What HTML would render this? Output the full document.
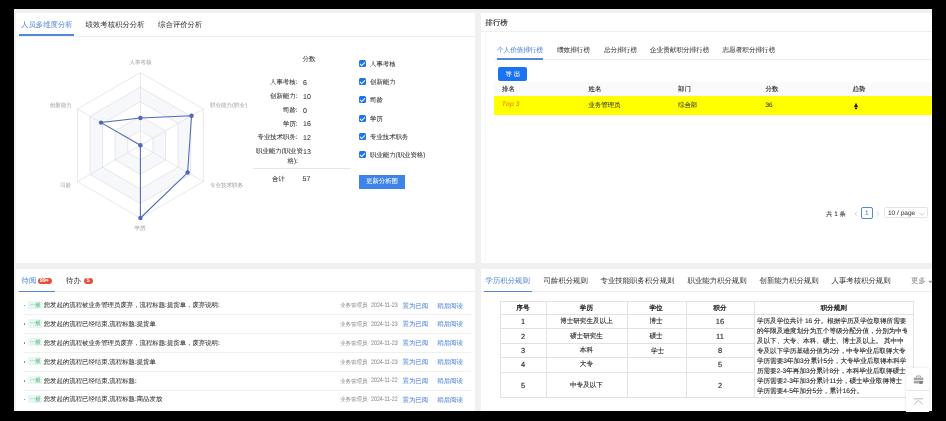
<!DOCTYPE html>
<html><head><meta charset="utf-8">
<style>
*{box-sizing:border-box;margin:0;padding:0}
html,body{width:946px;height:421px;overflow:hidden;background:#000}
body{position:relative;font-family:"Liberation Sans",sans-serif;color:#333;text-rendering:geometricPrecision;-webkit-text-stroke-width:0.06px}
.a{position:absolute}
.t{position:absolute;white-space:nowrap;line-height:1}
.card{position:absolute;background:#fff;overflow:hidden}
.hl{position:absolute;height:1px;background:#efefef}
.vl{position:absolute;width:1px;background:#efefef}
.f55{font-size:5.5px}
.f64{font-size:6.4px}
.f66{font-size:6.6px}
.f68{font-size:6.8px}
.f74{font-size:7.4px;-webkit-text-stroke-width:0.02px;color:#3a3a3a}
.blue{color:#5486dc}
.cb{position:absolute;width:7.3px;height:7.1px;background:#1f74ee;border-radius:1.5px}
.cb:after{content:"";position:absolute;left:2.4px;top:1px;width:1.9px;height:3.8px;border:solid #fff;border-width:0 0.8px 0.8px 0;transform:rotate(45deg)}
</style></head><body>
<div id="root" style="position:absolute;left:0;top:0;width:946px;height:421px;will-change:transform;filter:blur(0.3px)">
<div class="a" style="left:14px;top:9px;width:918px;height:402px;background:#f0f0f0"></div>

<!-- ============ top-left card ============ -->
<div class="card" style="left:15.5px;top:12.9px;width:459.7px;height:250.6px"></div>
<div class="t f74 blue" style="left:21px;top:21px">人员多维度分析</div>
<div class="t f74" style="left:85.5px;top:21px">绩效考核积分分析</div>
<div class="t f74" style="left:158px;top:21px">综合评价分析</div>
<div class="hl" style="left:15.5px;top:35.5px;width:459.7px"></div>
<div class="a" style="left:19px;top:34px;width:55px;height:2px;background:#5486dc"></div>

<div class="a" style="left:15px;top:37px;width:232px;height:220px;overflow:hidden">
<svg width="232" height="220" viewBox="15 37 232 220" style="position:absolute;left:0;top:0">
 <g id="radar">
 <path d="M140.40,116.22 L115.22,130.76 L115.22,159.84 L140.40,174.38 L165.58,159.84 L165.58,130.76Z M140.40,130.76 L127.81,138.03 L127.81,152.57 L140.40,159.84 L152.99,152.57 L152.99,138.03Z M140.40,87.14 L90.03,116.22 L90.03,174.38 L140.40,203.46 L190.77,174.38 L190.77,116.22Z M140.40,101.68 L102.62,123.49 L102.62,167.11 L140.40,188.92 L178.18,167.11 L178.18,123.49Z" fill="#f7f8fb" fill-rule="evenodd"/>
 <polygon points="140.40,130.76 127.81,138.03 127.81,152.57 140.40,159.84 152.99,152.57 152.99,138.03" fill="none" stroke="#e2e2e6" stroke-width="0.8"/>
 <polygon points="140.40,116.22 115.22,130.76 115.22,159.84 140.40,174.38 165.58,159.84 165.58,130.76" fill="none" stroke="#e2e2e6" stroke-width="0.8"/>
 <polygon points="140.40,101.68 102.62,123.49 102.62,167.11 140.40,188.92 178.18,167.11 178.18,123.49" fill="none" stroke="#e2e2e6" stroke-width="0.8"/>
 <polygon points="140.40,87.14 90.03,116.22 90.03,174.38 140.40,203.46 190.77,174.38 190.77,116.22" fill="none" stroke="#e2e2e6" stroke-width="0.8"/>
 <polygon points="140.40,72.60 77.44,108.95 77.44,181.65 140.40,218.00 203.36,181.65 203.36,108.95" fill="none" stroke="#e2e2e6" stroke-width="0.8"/>
 <line x1="140.4" y1="145.3" x2="140.40" y2="72.60" stroke="#e2e2e6" stroke-width="0.8"/>
 <line x1="140.4" y1="145.3" x2="77.44" y2="108.95" stroke="#e2e2e6" stroke-width="0.8"/>
 <line x1="140.4" y1="145.3" x2="77.44" y2="181.65" stroke="#e2e2e6" stroke-width="0.8"/>
 <line x1="140.4" y1="145.3" x2="140.40" y2="218.00" stroke="#e2e2e6" stroke-width="0.8"/>
 <line x1="140.4" y1="145.3" x2="203.36" y2="181.65" stroke="#e2e2e6" stroke-width="0.8"/>
 <line x1="140.4" y1="145.3" x2="203.36" y2="108.95" stroke="#e2e2e6" stroke-width="0.8"/>
 <polygon points="140.40,118.04 101.05,122.58 140.40,145.30 140.40,218.00 187.62,172.56 191.56,115.77" fill="none" stroke="#5068bc" stroke-width="1.05" stroke-linejoin="round"/>
 <circle cx="140.40" cy="118.04" r="2.2" fill="#5068bc"/>
 <circle cx="101.05" cy="122.58" r="2.2" fill="#5068bc"/>
 <circle cx="140.40" cy="145.30" r="2.2" fill="#5068bc"/>
 <circle cx="140.40" cy="218.00" r="2.2" fill="#5068bc"/>
 <circle cx="187.62" cy="172.56" r="2.2" fill="#5068bc"/>
 <circle cx="191.56" cy="115.77" r="2.2" fill="#5068bc"/>
 </g>
</svg>
<div class="t f55" style="left:114.5px;top:23.9px;color:#aaa">人事考核</div>
<div class="t f55" style="left:34.8px;top:67px;color:#aaa">创新能力</div>
<div class="t f55" style="left:195px;top:67px;color:#aaa">职业能力(职业资格)</div>
<div class="t f55" style="left:45.2px;top:146.8px;color:#aaa">司龄</div>
<div class="t f55" style="left:195px;top:146.5px;color:#aaa">专业技术职务</div>
<div class="t f55" style="left:119.5px;top:190px;color:#aaa">学历</div>
</div>

<!-- stats -->
<div class="t f64" style="left:302.5px;top:57.3px">分数</div>
<div class="t f64" style="left:270px;top:80.2px">人事考核:</div><div class="t" style="left:303px;top:79.6px;font-size:7px">6</div>
<div class="t f64" style="left:270px;top:94.2px">创新能力:</div><div class="t" style="left:303px;top:93.6px;font-size:7px">10</div>
<div class="t f64" style="left:283px;top:108.2px">司龄:</div><div class="t" style="left:303px;top:107.6px;font-size:7px">0</div>
<div class="t f64" style="left:283px;top:121.7px">学历:</div><div class="t" style="left:303px;top:121.1px;font-size:7px">16</div>
<div class="t f64" style="left:257.5px;top:135.2px">专业技术职务:</div><div class="t" style="left:303px;top:134.6px;font-size:7px">12</div>
<div class="t f64" style="left:256px;top:149.2px">职业能力(职业资</div><div class="t" style="left:303px;top:148.6px;font-size:7px">13</div>
<div class="t f64" style="left:287.5px;top:159px">格):</div>
<div class="hl" style="left:253px;top:168px;width:98px;background:#e6e6e6"></div>
<div class="t f64" style="left:272px;top:177px">合计</div><div class="t" style="left:302.5px;top:176.4px;font-size:7px">57</div>

<!-- checkboxes -->
<div class="cb" style="left:359px;top:60.0px"></div><div class="t f64" style="left:370px;top:62.0px">人事考核</div>
<div class="cb" style="left:359px;top:78.2px"></div><div class="t f64" style="left:370px;top:80.2px">创新能力</div>
<div class="cb" style="left:359px;top:96.4px"></div><div class="t f64" style="left:370px;top:98.4px">司龄</div>
<div class="cb" style="left:359px;top:114.6px"></div><div class="t f64" style="left:370px;top:116.6px">学历</div>
<div class="cb" style="left:359px;top:133.0px"></div><div class="t f64" style="left:370px;top:135.0px">专业技术职务</div>
<div class="cb" style="left:359px;top:151.3px"></div><div class="t f64" style="left:370px;top:153.3px">职业能力(职业资格)</div>
<div class="a" style="left:359px;top:174.8px;width:46px;height:13.8px;background:#3d83ea"></div>
<div class="t f64" style="left:366px;top:179.4px;color:#fff">更新分析图</div>

<!-- ============ top-right card ============ -->
<div class="card" style="left:481px;top:12.9px;width:451px;height:250.6px"></div>
<div class="t f74" style="left:485.5px;top:19px;color:#2a2a2a;-webkit-text-stroke-width:0.12px">排行榜</div>
<div class="hl" style="left:481px;top:31.2px;width:451px"></div>
<div class="vl" style="left:485.3px;top:31.5px;height:232px;background:#f9f9f9"></div>
<div class="t f66 blue" style="left:497px;top:47.50px">个人价值排行榜</div>
<div class="t f66" style="left:557px;top:47.50px;color:#444">绩效排行榜</div>
<div class="t f66" style="left:604px;top:47.50px;color:#444">总分排行榜</div>
<div class="t f66" style="left:650px;top:47.50px;color:#444">企业贡献积分排行榜</div>
<div class="t f66" style="left:722.5px;top:47.50px;color:#444">志愿者积分排行榜</div>
<div class="hl" style="left:494px;top:59px;width:438px"></div>
<div class="a" style="left:497px;top:58px;width:45.5px;height:1.5px;background:#5486dc"></div>
<div class="a" style="left:498px;top:67px;width:29px;height:14.3px;background:#1a73f0;border-radius:2px"></div>
<div class="t f64" style="left:505.5px;top:72px;color:#fff;letter-spacing:2px">导出</div>
<div class="a" style="left:494px;top:81.6px;width:438px;height:14.2px;background:#fafafa"></div>
<div class="t f64" style="left:502px;top:87.20px;color:#262626;-webkit-text-stroke-width:0.12px">排名</div>
<div class="t f64" style="left:588.5px;top:87.20px;color:#262626;-webkit-text-stroke-width:0.12px">姓名</div>
<div class="t f64" style="left:678px;top:87.20px;color:#262626;-webkit-text-stroke-width:0.12px">部门</div>
<div class="t f64" style="left:765.5px;top:87.20px;color:#262626;-webkit-text-stroke-width:0.12px">分数</div>
<div class="t f64" style="left:852.5px;top:87.20px;color:#262626;-webkit-text-stroke-width:0.12px">趋势</div>
<div class="a" style="left:494px;top:96px;width:438px;height:18.6px;background:#ffff00"></div>
<div class="t" style="left:501.8px;top:101.9px;font-size:6.7px;font-style:italic;font-weight:bold;color:#eb9a00;-webkit-text-stroke-width:0">Top 3</div>
<div class="t f64" style="left:588.5px;top:102.5px">业务管理员</div>
<div class="t f64" style="left:678px;top:102.5px">综合部</div>
<div class="t f64" style="left:765.5px;top:102.5px">36</div>
<svg class="a" style="left:853px;top:102px" width="6" height="8" viewBox="0 0 6 8"><path d="M3 0.8 L5.2 5.2 H0.8 Z" fill="#222"/><rect x="2" y="5.6" width="2" height="1.6" fill="#222"/></svg>
<!-- pagination -->
<div class="t f64" style="left:826px;top:211.50px;letter-spacing:0">共 1 条</div>
<svg class="a" style="left:854px;top:210.5px" width="4" height="6" viewBox="0 0 4 6"><path d="M3.2 0.6 L0.9 3 L3.2 5.4" fill="none" stroke="#c4c4c4" stroke-width="0.7"/></svg>
<div class="a" style="left:861px;top:207.4px;width:11.5px;height:11.2px;border:1px solid #5486dc;border-radius:2px"></div>
<div class="t" style="left:865px;top:211.3px;font-size:6.4px;color:#5486dc">1</div>
<svg class="a" style="left:875.5px;top:210.5px" width="4" height="6" viewBox="0 0 4 6"><path d="M0.8 0.6 L3.1 3 L0.8 5.4" fill="none" stroke="#c4c4c4" stroke-width="0.7"/></svg>
<div class="a" style="left:884.2px;top:207.4px;width:43.8px;height:11px;border:1px solid #e4e4e4;border-radius:1.5px"></div>
<div class="t" style="left:888px;top:211.3px;font-size:6.5px;color:#444">10 / page</div>
<svg class="a" style="left:919px;top:212px" width="6" height="4" viewBox="0 0 6 4"><path d="M0.5 0.8 L3 3.2 L5.5 0.8" fill="none" stroke="#bbb" stroke-width="0.7"/></svg>

<!-- ============ bottom-left card ============ -->
<div class="card" style="left:15.5px;top:268.6px;width:459.7px;height:142.4px"></div>
<div class="t f74 blue" style="left:21.5px;top:277.3px">待阅</div>
<div class="a" style="left:38.3px;top:277.5px;width:13.7px;height:6.7px;background:#e5503d;border-radius:3.4px"></div>
<div class="t" style="left:39.8px;top:279.1px;font-size:5.6px;color:#fff;font-weight:bold;letter-spacing:-0.2px;-webkit-text-stroke-width:0">99+</div>
<div class="t f74" style="left:66px;top:277.3px">待办</div>
<div class="a" style="left:83.5px;top:277.5px;width:9px;height:6.7px;background:#e5503d;border-radius:3.4px"></div>
<div class="t" style="left:86.4px;top:279.1px;font-size:5.6px;color:#fff;font-weight:bold;-webkit-text-stroke-width:0">5</div>
<div class="hl" style="left:15.5px;top:291px;width:459.7px"></div>
<div class="a" style="left:19px;top:290.5px;width:35.5px;height:1.5px;background:#5486dc"></div>
<div id="list">
<div class="a" style="left:23.6px;top:304.5px;width:1.9px;height:1.9px;background:#777;border-radius:1px"></div>
<div class="a" style="left:28.3px;top:300.5px;width:13.6px;height:8.4px;background:#e8f7ef;border-radius:1.5px"></div>
<div class="t f55" style="left:29.8px;top:303.6px;color:#5fba8c">一般</div>
<div class="t f64" style="left:43.7px;top:303.3px;color:#333">您发起的流程被业务管理员废弃，流程标题:提货单，废弃说明:</div>
<div class="t f55" style="left:340px;top:304.3px;color:#9a9a9a">业务管理员</div>
<div class="t" style="left:371.2px;top:303.2px;font-size:6.4px;color:#8c8c8c;transform:scaleX(0.83);transform-origin:0 0">2024-11-23</div>
<div class="t f64" style="left:402.5px;top:303.6px;color:#5486dc">置为已阅</div>
<div class="t f64" style="left:437.3px;top:303.6px;color:#5486dc">稍后阅读</div>
<div class="hl" style="left:23.8px;top:314.3px;width:447.5px;background:#f0f0f0"></div>
<div class="a" style="left:23.6px;top:323.3px;width:1.9px;height:1.9px;background:#777;border-radius:1px"></div>
<div class="a" style="left:28.3px;top:319.3px;width:13.6px;height:8.4px;background:#e8f7ef;border-radius:1.5px"></div>
<div class="t f55" style="left:29.8px;top:322.4px;color:#5fba8c">一般</div>
<div class="t f64" style="left:43.7px;top:322.1px;color:#333">您发起的流程已经结束,流程标题:提货单</div>
<div class="t f55" style="left:340px;top:323.1px;color:#9a9a9a">业务管理员</div>
<div class="t" style="left:371.2px;top:322.0px;font-size:6.4px;color:#8c8c8c;transform:scaleX(0.83);transform-origin:0 0">2024-11-23</div>
<div class="t f64" style="left:402.5px;top:322.4px;color:#5486dc">置为已阅</div>
<div class="t f64" style="left:437.3px;top:322.4px;color:#5486dc">稍后阅读</div>
<div class="hl" style="left:23.8px;top:333.1px;width:447.5px;background:#f0f0f0"></div>
<div class="a" style="left:23.6px;top:342.1px;width:1.9px;height:1.9px;background:#777;border-radius:1px"></div>
<div class="a" style="left:28.3px;top:338.1px;width:13.6px;height:8.4px;background:#e8f7ef;border-radius:1.5px"></div>
<div class="t f55" style="left:29.8px;top:341.2px;color:#5fba8c">一般</div>
<div class="t f64" style="left:43.7px;top:340.9px;color:#333">您发起的流程被业务管理员废弃，流程标题:提货单，废弃说明:</div>
<div class="t f55" style="left:340px;top:341.9px;color:#9a9a9a">业务管理员</div>
<div class="t" style="left:371.2px;top:340.8px;font-size:6.4px;color:#8c8c8c;transform:scaleX(0.83);transform-origin:0 0">2024-11-23</div>
<div class="t f64" style="left:402.5px;top:341.2px;color:#5486dc">置为已阅</div>
<div class="t f64" style="left:437.3px;top:341.2px;color:#5486dc">稍后阅读</div>
<div class="hl" style="left:23.8px;top:351.9px;width:447.5px;background:#f0f0f0"></div>
<div class="a" style="left:23.6px;top:360.9px;width:1.9px;height:1.9px;background:#777;border-radius:1px"></div>
<div class="a" style="left:28.3px;top:356.9px;width:13.6px;height:8.4px;background:#e8f7ef;border-radius:1.5px"></div>
<div class="t f55" style="left:29.8px;top:360.0px;color:#5fba8c">一般</div>
<div class="t f64" style="left:43.7px;top:359.7px;color:#333">您发起的流程已经结束,流程标题:提货单</div>
<div class="t f55" style="left:340px;top:360.7px;color:#9a9a9a">业务管理员</div>
<div class="t" style="left:371.2px;top:359.6px;font-size:6.4px;color:#8c8c8c;transform:scaleX(0.83);transform-origin:0 0">2024-11-23</div>
<div class="t f64" style="left:402.5px;top:360.0px;color:#5486dc">置为已阅</div>
<div class="t f64" style="left:437.3px;top:360.0px;color:#5486dc">稍后阅读</div>
<div class="hl" style="left:23.8px;top:370.7px;width:447.5px;background:#f0f0f0"></div>
<div class="a" style="left:23.6px;top:379.7px;width:1.9px;height:1.9px;background:#777;border-radius:1px"></div>
<div class="a" style="left:28.3px;top:375.7px;width:13.6px;height:8.4px;background:#e8f7ef;border-radius:1.5px"></div>
<div class="t f55" style="left:29.8px;top:378.8px;color:#5fba8c">一般</div>
<div class="t f64" style="left:43.7px;top:378.5px;color:#333">您发起的流程已经结束,流程标题:</div>
<div class="t f55" style="left:340px;top:379.5px;color:#9a9a9a">业务管理员</div>
<div class="t" style="left:371.2px;top:378.4px;font-size:6.4px;color:#8c8c8c;transform:scaleX(0.83);transform-origin:0 0">2024-11-22</div>
<div class="t f64" style="left:402.5px;top:378.8px;color:#5486dc">置为已阅</div>
<div class="t f64" style="left:437.3px;top:378.8px;color:#5486dc">稍后阅读</div>
<div class="hl" style="left:23.8px;top:389.5px;width:447.5px;background:#f0f0f0"></div>
<div class="a" style="left:23.6px;top:398.5px;width:1.9px;height:1.9px;background:#777;border-radius:1px"></div>
<div class="a" style="left:28.3px;top:394.5px;width:13.6px;height:8.4px;background:#e8f7ef;border-radius:1.5px"></div>
<div class="t f55" style="left:29.8px;top:397.6px;color:#5fba8c">一般</div>
<div class="t f64" style="left:43.7px;top:397.3px;color:#333">您发起的流程已经结束,流程标题:商品发放</div>
<div class="t f55" style="left:340px;top:398.3px;color:#9a9a9a">业务管理员</div>
<div class="t" style="left:371.2px;top:397.2px;font-size:6.4px;color:#8c8c8c;transform:scaleX(0.83);transform-origin:0 0">2024-11-22</div>
<div class="t f64" style="left:402.5px;top:397.6px;color:#5486dc">置为已阅</div>
<div class="t f64" style="left:437.3px;top:397.6px;color:#5486dc">稍后阅读</div>
</div>

<!-- ============ bottom-right card ============ -->
<div class="card" style="left:481px;top:268.6px;width:451px;height:142.4px"></div>
<div class="t f74 blue" style="left:485.5px;top:277px">学历积分规则</div>
<div class="t f74" style="left:543.5px;top:277px">司龄积分规则</div>
<div class="t f74" style="left:600.5px;top:277px">专业技能职务积分规则</div>
<div class="t f74" style="left:687.5px;top:277px">职业能力积分规则</div>
<div class="t f74" style="left:759.5px;top:277px">创新能力积分规则</div>
<div class="t f74" style="left:831.5px;top:277px">人事考核积分规则</div>
<div class="t f74" style="left:911px;top:277px;color:#999;-webkit-text-stroke-width:0.1px">更多</div>
<svg class="a" style="left:927.5px;top:279.5px" width="5" height="4" viewBox="0 0 5 4"><path d="M0.3 0.8 L2.5 3.2 L4.7 0.8 Z" fill="#999"/></svg>
<div class="hl" style="left:481px;top:291px;width:451px"></div>
<div class="a" style="left:483.5px;top:290.5px;width:48.5px;height:1.5px;background:#5486dc"></div>
<div id="rules">
<div class="a" style="left:499.5px;top:301.3px;width:414.5px;height:96.4px;border:1px solid #e2e2e2"></div>
<div class="vl" style="left:546.4px;top:301.3px;height:95.4px;background:#e2e2e2"></div>
<div class="vl" style="left:626.5px;top:301.3px;height:95.4px;background:#e2e2e2"></div>
<div class="vl" style="left:685.5px;top:301.3px;height:95.4px;background:#e2e2e2"></div>
<div class="vl" style="left:754.4px;top:301.3px;height:95.4px;background:#e2e2e2"></div>
<div class="hl" style="left:499.5px;top:313.6px;width:413.5px;background:#e2e2e2"></div>
<div class="hl" style="left:499.5px;top:328.2px;width:254.9px;background:#e2e2e2"></div>
<div class="hl" style="left:499.5px;top:342.6px;width:254.9px;background:#e2e2e2"></div>
<div class="hl" style="left:499.5px;top:357.1px;width:254.9px;background:#e2e2e2"></div>
<div class="hl" style="left:499.5px;top:371.7px;width:254.9px;background:#e2e2e2"></div>
<div class="t f66" style="left:499.5px;top:303.3px;width:46.9px;height:12.3px;line-height:12.3px;text-align:center;color:#222;-webkit-text-stroke-width:0.3px">序号</div>
<div class="t f66" style="left:546.4px;top:303.3px;width:80.1px;height:12.3px;line-height:12.3px;text-align:center;color:#222;-webkit-text-stroke-width:0.3px">学历</div>
<div class="t f66" style="left:626.5px;top:303.3px;width:59.0px;height:12.3px;line-height:12.3px;text-align:center;color:#222;-webkit-text-stroke-width:0.3px">学位</div>
<div class="t f66" style="left:685.5px;top:303.3px;width:68.9px;height:12.3px;line-height:12.3px;text-align:center;color:#222;-webkit-text-stroke-width:0.3px">积分</div>
<div class="t f66" style="left:754.4px;top:303.3px;width:158.6px;height:12.3px;line-height:12.3px;text-align:center;color:#222;-webkit-text-stroke-width:0.3px">积分规则</div>
<div class="t f66" style="left:499.5px;top:314.9px;width:46.9px;height:14.6px;line-height:14.6px;text-align:center;color:#2a2a2a;font-size:7.4px;-webkit-text-stroke-width:0.15px">1</div>
<div class="t f66" style="left:546.4px;top:314.9px;width:80.1px;height:14.6px;line-height:14.6px;text-align:center;color:#2a2a2a;-webkit-text-stroke-width:0.12px">博士研究生及以上</div>
<div class="t f66" style="left:626.5px;top:314.9px;width:59.0px;height:14.6px;line-height:14.6px;text-align:center;color:#2a2a2a;-webkit-text-stroke-width:0.12px">博士</div>
<div class="t f66" style="left:685.5px;top:314.9px;width:68.9px;height:14.6px;line-height:14.6px;text-align:center;color:#2a2a2a;font-size:7.4px;-webkit-text-stroke-width:0.15px">16</div>
<div class="t f66" style="left:499.5px;top:329.5px;width:46.9px;height:14.4px;line-height:14.4px;text-align:center;color:#2a2a2a;font-size:7.4px;-webkit-text-stroke-width:0.15px">2</div>
<div class="t f66" style="left:546.4px;top:329.5px;width:80.1px;height:14.4px;line-height:14.4px;text-align:center;color:#2a2a2a;-webkit-text-stroke-width:0.12px">硕士研究生</div>
<div class="t f66" style="left:626.5px;top:329.5px;width:59.0px;height:14.4px;line-height:14.4px;text-align:center;color:#2a2a2a;-webkit-text-stroke-width:0.12px">硕士</div>
<div class="t f66" style="left:685.5px;top:329.5px;width:68.9px;height:14.4px;line-height:14.4px;text-align:center;color:#2a2a2a;font-size:7.4px;-webkit-text-stroke-width:0.15px">11</div>
<div class="t f66" style="left:499.5px;top:343.9px;width:46.9px;height:14.5px;line-height:14.5px;text-align:center;color:#2a2a2a;font-size:7.4px;-webkit-text-stroke-width:0.15px">3</div>
<div class="t f66" style="left:546.4px;top:343.9px;width:80.1px;height:14.5px;line-height:14.5px;text-align:center;color:#2a2a2a;-webkit-text-stroke-width:0.12px">本科</div>
<div class="t f66" style="left:628px;top:344.9px;width:59.0px;height:14.5px;line-height:14.5px;text-align:center;color:#2a2a2a;-webkit-text-stroke-width:0.12px">学士</div>
<div class="t f66" style="left:685.5px;top:343.9px;width:68.9px;height:14.5px;line-height:14.5px;text-align:center;color:#2a2a2a;font-size:7.4px;-webkit-text-stroke-width:0.15px">8</div>
<div class="t f66" style="left:499.5px;top:358.4px;width:46.9px;height:14.6px;line-height:14.6px;text-align:center;color:#2a2a2a;font-size:7.4px;-webkit-text-stroke-width:0.15px">4</div>
<div class="t f66" style="left:546.4px;top:358.4px;width:80.1px;height:14.6px;line-height:14.6px;text-align:center;color:#2a2a2a;-webkit-text-stroke-width:0.12px">大专</div>
<div class="t f66" style="left:685.5px;top:358.4px;width:68.9px;height:14.6px;line-height:14.6px;text-align:center;color:#2a2a2a;font-size:7.4px;-webkit-text-stroke-width:0.15px">5</div>
<div class="t f66" style="left:499.5px;top:373.0px;width:46.9px;height:25.0px;line-height:25.0px;text-align:center;color:#2a2a2a;font-size:7.4px;-webkit-text-stroke-width:0.15px">5</div>
<div class="t f66" style="left:546.4px;top:373.0px;width:80.1px;height:25.0px;line-height:25.0px;text-align:center;color:#2a2a2a;-webkit-text-stroke-width:0.12px">中专及以下</div>
<div class="t f66" style="left:685.5px;top:373.0px;width:68.9px;height:25.0px;line-height:25.0px;text-align:center;color:#2a2a2a;font-size:7.4px;-webkit-text-stroke-width:0.15px">2</div>
<div class="a" style="left:754.9px;top:314px;width:152px;height:82px;overflow:hidden">
<div class="t f66" style="left:2px;top:5.10px;color:#2a2a2a;-webkit-text-stroke-width:0.12px">学历及学位共计 16 分。根据学历及学位取得所需要</div>
<div class="t f66" style="left:2px;top:15.03px;color:#2a2a2a;-webkit-text-stroke-width:0.12px">的年限及难度划分为五个等级分配分值，分别为中专</div>
<div class="t f66" style="left:2px;top:24.96px;color:#2a2a2a;-webkit-text-stroke-width:0.12px">及以下、大专、本科、硕士、博士及以上。 其中中</div>
<div class="t f66" style="left:2px;top:34.89px;color:#2a2a2a;-webkit-text-stroke-width:0.12px">专及以下学历基础分值为2分，中专毕业后取得大专</div>
<div class="t f66" style="left:2px;top:44.82px;color:#2a2a2a;-webkit-text-stroke-width:0.12px">学历需要3年加3分累计5分，大专毕业后取得本科学</div>
<div class="t f66" style="left:2px;top:54.75px;color:#2a2a2a;-webkit-text-stroke-width:0.12px">历需要2-3年再加3分累计8分，本科毕业后取得硕士</div>
<div class="t f66" style="left:2px;top:64.68px;color:#2a2a2a;-webkit-text-stroke-width:0.12px">学历需要2-3年加3分累计11分，硕士毕业取得博士</div>
<div class="t f66" style="left:2px;top:74.61px;color:#2a2a2a;-webkit-text-stroke-width:0.12px">学历需要4-5年加分5分，累计16分。</div>
</div>
<div class="a" style="left:905.8px;top:367.8px;width:23.5px;height:44px;background:#fff;box-shadow:0 0 3px rgba(0,0,0,0.12)"></div>
<div class="hl" style="left:905.8px;top:390.4px;width:23.5px;background:#e6e6e6"></div>
<svg class="a" style="left:912.5px;top:374.5px" width="11" height="10" viewBox="0 0 11 10"><path d="M3.5 2.2 V1 H7.5 V2.2" fill="none" stroke="#9a9a9a" stroke-width="0.9"/><rect x="0.8" y="2.4" width="9.4" height="6.2" rx="0.8" fill="#a5a5a5"/><rect x="0.8" y="5" width="9.4" height="0.7" fill="#fff"/><rect x="6.5" y="6.3" width="3" height="2.5" fill="#777"/></svg>
<svg class="a" style="left:912.5px;top:397.5px" width="11" height="7" viewBox="0 0 11 7"><path d="M0.8 0.8 H10.2" stroke="#aaa" stroke-width="0.8"/><path d="M1.3 6.2 L5.5 2.5 L9.7 6.2" fill="none" stroke="#aaa" stroke-width="0.8"/></svg>
</div>
</div>
</body></html>
